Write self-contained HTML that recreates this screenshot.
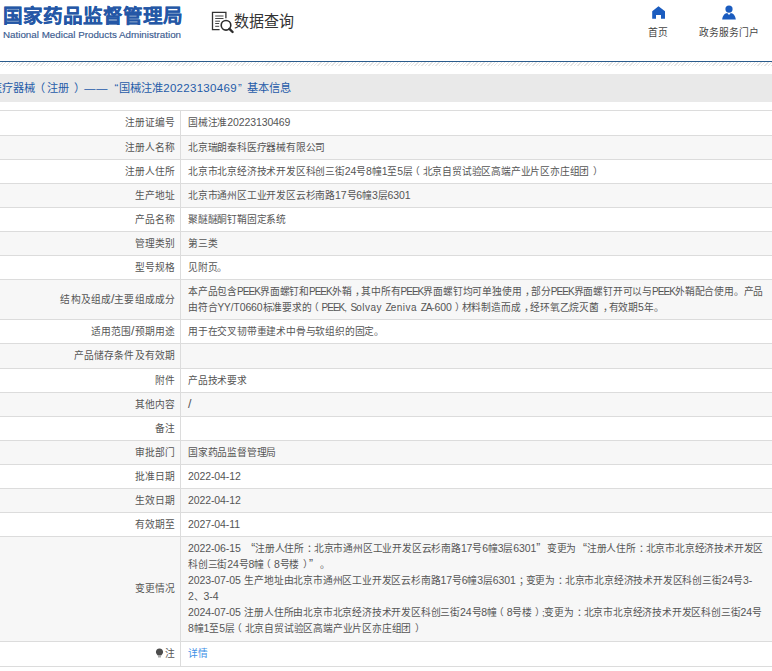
<!DOCTYPE html>
<html lang="zh-CN">
<head>
<meta charset="utf-8">
<style>
html,body{margin:0;padding:0;background:#fff;width:772px;height:671px;overflow:hidden;position:relative;}
body{font-family:"Liberation Sans",sans-serif;color:#555;}
.abs{position:absolute;white-space:nowrap;}
.logo{left:3px;top:3.5px;font-size:19.6px;font-weight:bold;-webkit-text-stroke:0.2px #2457a6;transform:scaleY(0.96);transform-origin:0 0;color:#2457a6;line-height:26px;}
.en{left:3px;top:28.5px;font-size:9.8px;color:#3a5b90;line-height:12px;-webkit-text-stroke:0.15px #3a5b90;}
.dq{left:234px;top:10.5px;font-size:15px;color:#333;line-height:20px;transform:scaleY(1.08);transform-origin:0 0;font-weight:500;}
.nav{font-size:9.75px;color:#444;line-height:12px;}
.topline{left:0;top:61px;width:772px;height:1px;background:#2a5b8c;}
.hatch{left:0;top:62px;width:772px;height:4px;background:repeating-linear-gradient(135deg,#fff 0,#fff 1.55px,#e4e4e4 1.55px,#e4e4e4 2.45px);}
.band{left:0;top:74px;width:772px;height:28px;background:#e9e9e9;}
.row{position:absolute;left:0;width:772px;border-bottom:1px solid #dcdcdc;box-sizing:border-box;}
.row.g{background:#f7f7f7;}
.lab{position:absolute;right:597px;white-space:nowrap;font-size:9.75px;line-height:16px;letter-spacing:0.1px;}
.val{position:absolute;left:188px;white-space:nowrap;font-size:9.75px;line-height:16px;letter-spacing:-0.2px;word-spacing:1.2px;}
.vl{position:absolute;left:180px;top:110px;width:1px;height:556px;background:#dcdcdc;}
.tt{position:absolute;left:0;top:110px;width:772px;height:1px;background:#dcdcdc;}
i{font-style:normal;}
.ql{display:inline-block;width:10.6px;text-align:right;font-size:12px;line-height:0;}
.qr{display:inline-block;width:10.6px;text-align:left;font-size:12px;line-height:0;}
.pl{position:relative;left:-0.3em;}
.pr{position:relative;left:0.35em;}
.co{position:relative;left:0.3em;}
.C{letter-spacing:-0.95px;font-size:10px;line-height:0;}
.cm{position:relative;left:0.38em;}
.D{letter-spacing:-0.1px;font-size:10.5px;line-height:0;}
.W{letter-spacing:0.45px;font-size:10px;line-height:0;}
.link{color:#3d8fe6;}
.bulb{vertical-align:-1px;margin-right:1px;}
.bandt{top:81px;font-size:11.2px;color:#1f5ba8;line-height:14px;}
.yt{letter-spacing:0px;font-size:10px;line-height:0;}
.BD{font-size:11.5px;letter-spacing:0.3px;line-height:0;}
.sl{font-size:12.5px;line-height:0;letter-spacing:0;}

</style>
</head>
<body>
<div class="abs logo">国家药品监督管理局</div>
<div class="abs en">National Medical Products Administration</div>
<svg class="abs" style="left:210px;top:10px" width="26" height="26" viewBox="0 0 26 26">
 <path d="M15.9 8.2 V2.4 H2.5 V19.6 H9.6" fill="none" stroke="#333" stroke-width="1.3"/>
 <path d="M5.2 6h8.3M5.2 8.5h8.3M5.2 11.2h4.8M5.2 13.5h4M5.2 16.3h4" stroke="#444" stroke-width="1"/>
 <circle cx="16" cy="15.3" r="4.8" fill="none" stroke="#2d2d2d" stroke-width="1.6"/>
 <path d="M19.4 18.8 L22.6 22" stroke="#2d2d2d" stroke-width="2.4" stroke-linecap="round"/>
</svg>
<div class="abs dq">数据查询</div>

<svg class="abs" style="left:650px;top:5px" width="18" height="15" viewBox="0 0 18 15">
 <path d="M8.5 1.2 L15 6.3 V13.8 H11 V9.9 H6 V13.8 H2.2 V6.3 Z" fill="#1b5cbf"/>
</svg>
<div class="abs nav" style="left:648px;top:27px">首页</div>
<svg class="abs" style="left:720px;top:4px" width="18" height="17" viewBox="0 0 18 17">
 <circle cx="9" cy="5.1" r="3.6" fill="#1b5cbf"/>
 <path d="M2.2 15.5 C2.6 11.5 5 9.3 7.2 9.1 L9 11 L10.8 9.1 C13 9.3 15.4 11.5 15.8 15.5 Z" fill="#1b5cbf"/>
</svg>
<div class="abs nav" style="left:699px;top:27px">政务服务门户</div>

<div class="abs topline"></div>
<div class="abs hatch"></div>
<div class="abs band"></div>
<div class="abs bandt" style="left:-8.6px">医疗器械</div>
<div class="abs bandt" style="left:33.8px">（</div>
<div class="abs bandt" style="left:46.6px">注册</div>
<div class="abs bandt" style="left:73.5px">）</div>
<div class="abs bandt" style="left:84.3px;letter-spacing:0.7px">——</div>
<div class="abs bandt" style="left:114.6px">“</div>
<div class="abs bandt" style="left:119.2px">国械注准<span class="BD">20223130469</span></div>
<div class="abs bandt" style="left:238px">”</div>
<div class="abs bandt" style="left:247.3px">基本信息</div>


<div class="tt"></div>
<div class="row" style="top:111px;height:25px"><div class="lab" style="top:4.0px">注册证编号</div><div class="val" style="top:4.0px">国械注准<span class="D">20223130469</span></div></div>
<div class="row g" style="top:136px;height:24px"><div class="lab" style="top:3.5px">注册人名称</div><div class="val" style="top:3.5px">北京瑞朗泰科医疗器械有限公司</div></div>
<div class="row" style="top:160px;height:24px"><div class="lab" style="top:3.5px">注册人住所</div><div class="val" style="top:3.5px">北京市北京经济技术开发区科创三街<span class="D">24</span>号<span class="D">8</span>幢<span class="D">1</span>至<span class="D">5</span>层<i class="pl">（</i>北京自贸试验区高端产业片区亦庄组团<i class="pr">）</i></div></div>
<div class="row g" style="top:184px;height:24px"><div class="lab" style="top:3.5px">生产地址</div><div class="val" style="top:3.5px">北京市通州区工业开发区云杉南路<span class="D">17</span>号<span class="D">6</span>幢<span class="D">3</span>层<span class="D">6301</span></div></div>
<div class="row" style="top:208px;height:24px"><div class="lab" style="top:3.5px">产品名称</div><div class="val" style="top:3.5px">聚醚醚酮钉鞘固定系统</div></div>
<div class="row g" style="top:232px;height:24px"><div class="lab" style="top:3.5px">管理类别</div><div class="val" style="top:3.5px">第三类</div></div>
<div class="row" style="top:256px;height:24px"><div class="lab" style="top:3.5px">型号规格</div><div class="val" style="top:3.5px">见附页。</div></div>
<div class="row g" style="top:280px;height:40px"><div class="lab" style="top:11.5px">结构及组成<i class="sl">/</i>主要组成成分</div><div class="val" style="top:3.5px">本产品包含<span class="C">PEEK</span>界面螺钉和<span class="C">PEEK</span>外鞘<i class="cm">，</i>其中所有<span class="C">PEEK</span>界面螺钉均可单独使用<i class="cm">，</i>部分<span class="C">PEEK</span>界面螺钉开可以与<span class="C">PEEK</span>外鞘配合使用。产品<br>由符合<span class="yt">YY/T</span><span class="D">0660</span>标准要求的<i class="pl">（</i><span class="C">PEEK</span>, <span class="C">S</span><span class="W">olvay</span> <span class="C">Z</span><span class="W">eniva</span> <span class="C">ZA</span>-<span class="D">600</span><i class="pr">）</i>材料制造而成<i class="cm">，</i>经环氧乙烷灭菌<i class="cm">，</i>有效期<span class="D">5</span>年。</div></div>
<div class="row" style="top:320px;height:24px"><div class="lab" style="top:3.5px">适用范围<i class="sl">/</i>预期用途</div><div class="val" style="top:3.5px">用于在交叉韧带重建术中骨与软组织的固定。</div></div>
<div class="row g" style="top:344px;height:25px"><div class="lab" style="top:4.0px">产品储存条件及有效期</div><div class="val" style="top:4.0px"></div></div>
<div class="row" style="top:369px;height:24px"><div class="lab" style="top:3.5px">附件</div><div class="val" style="top:3.5px">产品技术要求</div></div>
<div class="row g" style="top:393px;height:24px"><div class="lab" style="top:3.5px">其他内容</div><div class="val" style="top:3.5px"><i class="sl">/</i></div></div>
<div class="row" style="top:417px;height:24px"><div class="lab" style="top:3.5px">备注</div><div class="val" style="top:3.5px"></div></div>
<div class="row g" style="top:441px;height:24px"><div class="lab" style="top:3.5px">审批部门</div><div class="val" style="top:3.5px">国家药品监督管理局</div></div>
<div class="row" style="top:465px;height:24px"><div class="lab" style="top:3.5px">批准日期</div><div class="val" style="top:3.5px"><span class="D">2022-04-12</span></div></div>
<div class="row g" style="top:489px;height:24px"><div class="lab" style="top:3.5px">生效日期</div><div class="val" style="top:3.5px"><span class="D">2022-04-12</span></div></div>
<div class="row" style="top:513px;height:24px"><div class="lab" style="top:3.5px">有效期至</div><div class="val" style="top:3.5px"><span class="D">2027-04-11</span></div></div>
<div class="row g" style="top:537px;height:105px"><div class="lab" style="top:44.0px">变更情况</div><div class="val" style="top:4.0px"><span class="D">2022-06-15</span> <i class="ql">“</i>注册人住所<i class="co">：</i>北京市通州区工业开发区云杉南路<span class="D">17</span>号<span class="D">6</span>幢<span class="D">3</span>层<span class="D">6301</span><i class="qr">”</i>变更为<i class="ql">“</i>注册人住所<i class="co">：</i>北京市北京经济技术开发区<br>科创三街<span class="D">24</span>号<span class="D">8</span>幢<i class="pl">（</i><span class="D">8</span>号楼<i class="pr">）</i><i class="qr">”</i>。<br><span class="D">2023-07-05</span> 生产地址由北京市通州区工业开发区云杉南路<span class="D">17</span>号<span class="D">6</span>幢<span class="D">3</span>层<span class="D">6301</span><i class="co">；</i>变更为<i class="co">：</i>北京市北京经济技术开发区科创三街<span class="D">24</span>号<span class="D">3-</span><br><span class="D">2</span>、<span class="D">3-4</span><br><span class="D">2024-07-05</span> 注册人住所由北京市北京经济技术开发区科创三街<span class="D">24</span>号<span class="D">8</span>幢<i class="pl">（</i><span class="D">8</span>号楼<i class="pr">）</i>;变更为<i class="co">：</i>北京市北京经济技术开发区科创三街<span class="D">24</span>号<br><span class="D">8</span>幢<span class="D">1</span>至<span class="D">5</span>层<i class="pl">（</i>北京自贸试验区高端产业片区亦庄组团<i class="pr">）</i></div></div>
<div class="row" style="top:642px;height:25px"><div class="lab" style="top:4.0px"><svg class="bulb" width="9" height="10" viewBox="0 0 9 10"><path d="M4.5 0.6 C6.7 0.6 8.1 2.2 8.1 4.1 C8.1 5.7 6.9 6.5 6.2 7.5 H2.8 C2.1 6.5 0.9 5.7 0.9 4.1 C0.9 2.2 2.3 0.6 4.5 0.6 Z" fill="#4d4d4d"/><rect x="3" y="8" width="3" height="1.5" fill="#aaa"/></svg>注</div><div class="val" style="top:4.0px"><span class="link">详情</span></div></div>
<div class="vl"></div>
</body>
</html>
